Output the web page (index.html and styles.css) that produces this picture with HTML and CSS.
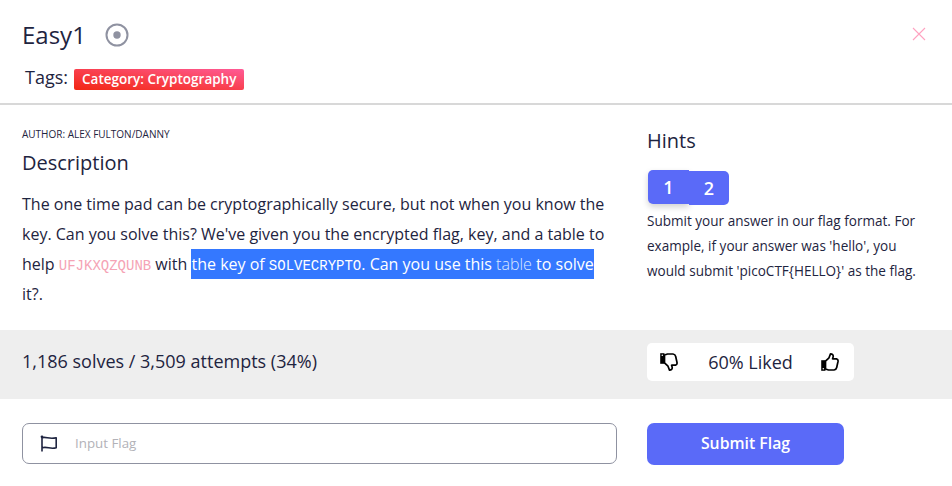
FILE: index.html
```html
<!DOCTYPE html>
<html lang="en">
<head>
<meta charset="utf-8">
<title>Easy1</title>
<link rel="stylesheet" href="styles.css">
</head>
<body>
<header class="head">
  <div class="title-row">
    <h1 class="title">Easy1</h1>
    <svg class="target" viewBox="0 0 24 24"><circle cx="12" cy="12" r="10.5" fill="none" stroke="#8f92a1" stroke-width="2"/><circle cx="12" cy="12" r="3.7" fill="#8f92a1"/></svg>
    <svg class="close" viewBox="0 0 14 14"><path d="M1 1l12 12M13 1L1 13" stroke="#ffa2c0" stroke-width="1.1" fill="none"/></svg>
  </div>
  <div class="tags"><span class="tags-label">Tags:</span><span class="tag">Category: Cryptography</span></div>
</header>
<main class="body">
  <section class="description">
    <div class="author">AUTHOR: ALEX FULTON/DANNY</div>
    <h2 class="heading">Description</h2>
    <p class="text">The one time pad can be cryptographically secure, but not when you know the<br>key. Can you solve this? We've given you the encrypted flag, key, and a table to<br>help <code class="cipher">UFJKXQZQUNB</code> with <span class="selected">the key of <code>SOLVECRYPTO</code>. Can you use this <a class="link">table</a> to solve</span><br>it?.</p>
  </section>
  <aside class="hints">
    <h2 class="heading">Hints</h2>
    <div class="hint-buttons"><button class="hint active">1</button><button class="hint">2</button></div>
    <p class="hint-text">Submit your answer in our flag format. For<br>example, if your answer was 'hello', you<br>would submit 'picoCTF{HELLO}' as the flag.</p>
  </aside>
</main>
<section class="stats">
  <div class="solves">1,186 solves / 3,509 attempts (34%)</div>
  <div class="rating">
    <svg class="thumb down" viewBox="0 0 18 18"><g fill="none" stroke="#000" stroke-width="1.7" stroke-linejoin="round"><path d="M4.5 8.200 8 4.800 9.500.9Q12.400 .9 12.200 3.600L11.600 5.800H15.500Q17.400 6.200 17 8.500L15.700 14.500Q15.200 16.700 13 17H7.500L4.500 16Z"/></g><path d="M.2 7.200h4.300v10.600H.2z"/><circle cx="2.300" cy="15.800" r=".8" fill="#fff"/></svg>
    <span>60% Liked</span>
    <svg class="thumb" viewBox="0 0 18 18"><g fill="none" stroke="#000" stroke-width="1.700" stroke-linejoin="round"><path d="M4.500 8.200 8 4.800 9.500.9Q12.400 .9 12.200 3.600L11.600 5.800H15.500Q17.400 6.200 17 8.500L15.700 14.500Q15.200 16.700 13 17H7.500L4.500 16Z"/></g><path d="M.2 7.200h4.300v10.600H.2z"/><circle cx="2.300" cy="15.800" r=".8" fill="#fff"/></svg>
  </div>
</section>
<form class="submit">
  <label class="field">
    <svg class="flag" viewBox="0 0 18 18"><path d="M2 1.500v15M2 2.700c4-1.400 7 1.800 14.200 0v10c-6 1.900-9-1.600-14.200.1" fill="none" stroke="#1e2440" stroke-width="1.600" stroke-linejoin="round"/><circle cx="2" cy="1.800" r="1.400" fill="#1e2440"/></svg>
    <input type="text" placeholder="Input Flag">
  </label>
  <button type="button" class="send">Submit Flag</button>
</form>
</body>
</html>
```

FILE: styles.css
```css
* { box-sizing: border-box; }
body { margin: 0; background: #fff; color: #1e2440; font-family: "Open Sans", sans-serif; }
h1, h2, p { margin: 0; font-weight: 400; }
button, input { font-family: inherit; border: 0; }

.head { height: 105px; border-bottom: 2px solid #d8d8d8; padding: 19px 26px 0 22px; }
.title-row { display: flex; align-items: center; height: 32px; }
.title { font-size: 24px; line-height: 32px; }
.target { width: 24px; height: 24px; margin-left: 19px; }
.close { width: 14px; height: 14px; margin: 0 0 2px auto; }
.tags { display: flex; align-items: center; height: 22px; margin-top: 17px; padding-left: 3px; }
.tags-label { font-size: 18px; line-height: 22px; margin-top: -4px; }
.tag { margin: 1px 0 0 6px; padding: 0 8px; height: 21px; line-height: 21px; border-radius: 2px; font-size: 13.5px; font-weight: 600; color: #fff; background: linear-gradient(to top right, #f22613, #f9404e 50%, #ff5b97); }

.body { display: grid; grid-template-columns: 625px 1fr; height: 225px; padding-left: 22px; }
.description { padding-top: 22px; }
.author { font-size: 10px; line-height: 14px; }
.heading { font-size: 20px; line-height: 28px; }
.description .heading { margin-top: 8px; }
.text { margin-top: 12px; font-size: 16px; line-height: 30px; white-space: nowrap; }
.text code { font-family: "Liberation Mono", monospace; font-size: 14px; line-height: 1; }
.text .cipher { color: #f5a3b5; }
.selected { padding: 4px 0; background: #3478ff; color: #fff; }
.link { color: #dce7ff; font-weight: 300; }

.hints { padding-top: 22px; }
.hint-buttons { display: flex; margin: 15px 0 0 1px; }
.hint { width: 40px; height: 34px; padding: 0; margin-top: 1px; background: #5a6af8; color: #fff; font-size: 18px; font-weight: 600; border-radius: 0 5px 5px 0; }
.hint.active { width: 41px; margin-top: 0; border-radius: 5px 0 0 5px; box-shadow: 0 3px 6px rgba(0, 0, 0, .18); }
.hint-text { margin-top: 4px; font-size: 13.55px; line-height: 25px; white-space: nowrap; }

.stats { display: grid; grid-template-columns: 625px 207px; align-items: center; height: 68.5px; padding-left: 22px; background: #eee; }
.solves { font-size: 18px; line-height: 24px; margin-top: -7px; }
.rating { display: flex; align-items: center; justify-content: space-between; height: 38px; margin-top: -4px; padding: 0 15px 0 13px; background: #fff; border-radius: 5px; font-size: 18px; }
.rating span { margin-left: 2px; }
.thumb { width: 18px; height: 18px; }
.down { transform: scaleY(-1); }

.submit { display: grid; grid-template-columns: 595px 197px; column-gap: 30px; padding: 24.5px 0 0 22px; }
.field { display: flex; align-items: center; height: 41px; padding-left: 17px; border: 1px solid #8f92a1; border-radius: 7px; }
.flag { width: 18px; height: 18px; }
.field input { flex: 1; margin: -2px 0 0 17px; padding: 0; outline: 0; background: transparent; font-size: 13.33px; }
.field input::placeholder { color: #b2b2b8; }
.send { height: 42.5px; padding: 0 0 2px; margin-top: -.5px; background: #5a6af8; color: #fff; font-size: 15.8px; font-weight: 600; border-radius: 7px; }
```
